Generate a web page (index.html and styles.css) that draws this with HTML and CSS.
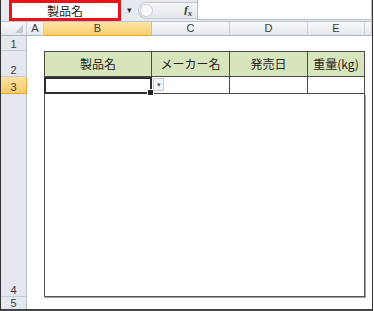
FILE: index.html
```html
<!DOCTYPE html>
<html lang="ja">
  <head>
    <meta charset="UTF-8" />
    <meta name="viewport" content="width=device-width, initial-scale=1.0" />
    <title>製品一覧</title>
    <link rel="stylesheet" href="styles.css">
  </head>
  <body>
    <div class="ventana">
      <div class="barra">
        <div class="nombre">製品名</div>
        <div class="flecha">&#9662;</div>
        <div class="pastilla">
          <span class="bolita"></span>
          <span class="fx">f<sub>x</sub></span>
        </div>
        <div class="formula"></div>
      </div>

      <div class="hoja">
        <div class="esquina"><span class="triangulo"></span></div>
        <div class="col">A</div>
        <div class="col activa">B</div>
        <div class="col">C</div>
        <div class="col">D</div>
        <div class="col">E</div>
        <div class="col"></div>

        <div class="fila f1">1</div>
        <div class="fila f2">2</div>
        <div class="fila f3 activa">3</div>
        <div class="fila f4">4</div>
        <div class="fila f5">5</div>

        <div class="titulo cb">製品名</div>
        <div class="titulo cc">メーカー名</div>
        <div class="titulo cd">発売日</div>
        <div class="titulo ce">重量(kg)</div>

        <div class="celda cb seleccion"><span class="asa"></span></div>
        <div class="celda cc"><span class="lista">&#9662;</span></div>
        <div class="celda cd"></div>
        <div class="celda ce"></div>

        <div class="caja"></div>
      </div>
    </div>
  </body>
</html>
```

FILE: styles.css
```css
body {
  margin: 0;
  font-family: "Liberation Sans", Arial, sans-serif;
  background: #fff;
}

.ventana {
  width: 373px;
  height: 311px;
  box-sizing: border-box;
  border-left: 1px solid #333;
  border-right: 1px solid #333;
  border-bottom: 2px solid #444;
  display: flex;
  flex-direction: column;
  overflow: hidden;
}

/* barra de formulas */
.barra {
  height: 22px;
  box-sizing: border-box;
  display: flex;
  align-items: flex-start;
  padding-left: 8px;
  background: #e6eaf0;
  border-bottom: 1px solid #bcc4ce;
}

.nombre {
  width: 112px;
  height: 21px;
  box-sizing: border-box;
  border: 3px solid #e8141b;
  background: #fff;
  font-family: "Noto Sans CJK JP", sans-serif;
  font-size: 12px;
  line-height: 15px;
  text-align: center;
  color: #222;
}

.flecha {
  width: 17px;
  height: 21px;
  font-size: 9px;
  line-height: 21px;
  text-align: center;
  color: #333;
}

.pastilla {
  width: 59px;
  height: 17px;
  margin-top: 2px;
  box-sizing: border-box;
  border: 1px solid #c3c9d1;
  border-right: none;
  border-radius: 9px 0 0 9px;
  background: linear-gradient(#f4f6f8, #e2e6eb);
  display: flex;
  align-items: center;
  justify-content: space-between;
  padding: 0 5px 0 1px;
}

.bolita {
  width: 13px;
  height: 13px;
  border-radius: 50%;
  border: 1px solid #c9ced6;
  background: #f7f8fa;
  box-sizing: border-box;
}

.fx {
  font-family: "Liberation Serif", serif;
  font-style: italic;
  font-weight: bold;
  font-size: 11px;
  color: #333;
}

.fx sub {
  font-size: 8px;
}

.formula {
  flex: 1;
  height: 20px;
  box-sizing: border-box;
  border: 1px solid #b7bec8;
  border-top: none;
  background: #fff;
}

/* hoja */
.hoja {
  flex: 1;
  display: grid;
  grid-template-columns: 26px 17px 108px 78px 78px 57px 1fr;
  grid-template-rows: 14px 15px 26px 17px 203px 1fr;
}

.esquina,
.col {
  grid-row: 1;
  background: linear-gradient(#f8f9fb, #e3e7ed);
  border-right: 1px solid #c9cfd7;
  border-bottom: 1px solid #a9b4c2;
  box-sizing: border-box;
}

.esquina {
  position: relative;
}

.triangulo {
  position: absolute;
  right: 3px;
  bottom: 2px;
  width: 0;
  height: 0;
  border-left: 8px solid transparent;
  border-bottom: 8px solid #c1c7cf;
}

.col {
  font-size: 11px;
  line-height: 13px;
  text-align: center;
  color: #3c3c3c;
}

.col.activa {
  background: linear-gradient(#fce5a8, #f8cd6c);
  border-bottom: 1px solid #f0a632;
  border-right-color: #e6bb6a;
}

.fila {
  grid-column: 1;
  background: #e4e8ee;
  border-bottom: 1px solid #c5ccd5;
  border-right: 1px solid #b8c2ce;
  box-sizing: border-box;
  font-size: 11px;
  line-height: 12px;
  color: #3c3c3c;
  display: flex;
  align-items: flex-end;
  justify-content: center;
}

.fila.activa {
  background: linear-gradient(#fbe1a0, #f7cb6a);
  border-bottom-color: #f0a632;
  border-right-color: #f0a632;
}

.f1 { grid-row: 2; }
.f2 { grid-row: 3; }
.f3 { grid-row: 4; }
.f4 { grid-row: 5; }
.f5 { grid-row: 6; border-bottom: none; }

/* tabla */
.cb { grid-column: 3; border-left: 1px solid #4a4a4a; }
.cc { grid-column: 4; }
.cd { grid-column: 5; }
.ce { grid-column: 6; }

.titulo,
.celda {
  box-sizing: border-box;
  border-right: 1px solid #4a4a4a;
  border-bottom: 1px solid #4a4a4a;
}

.titulo {
  grid-row: 3;
  background: #d8e4bc;
  border-top: 1px solid #4a4a4a;
  font-family: "Noto Sans CJK JP", sans-serif;
  font-size: 12px;
  color: #222;
  display: flex;
  align-items: center;
  justify-content: center;
  padding-bottom: 2px;
}

.celda {
  grid-row: 4;
  background: #fff;
}

.seleccion {
  position: relative;
  border: 2px solid #2e2e2e;
}

.asa {
  position: absolute;
  right: -4px;
  bottom: -4px;
  width: 5px;
  height: 5px;
  background: #222;
  border: 1px solid #fff;
}

.lista {
  display: block;
  width: 11px;
  height: 13px;
  margin: 1px 0 0 1px;
  box-sizing: border-box;
  border: 1px solid #c4c9d0;
  background: #f4f5f7;
  font-size: 7px;
  line-height: 11px;
  text-align: center;
  color: #555;
}

.caja {
  grid-row: 5;
  grid-column: 3 / 7;
  border-left: 1px solid #555;
  border-right: 1px solid #555;
  border-bottom: 1px solid #555;
  box-shadow: 1px 1px 0 #a0a0a0;
}
```
